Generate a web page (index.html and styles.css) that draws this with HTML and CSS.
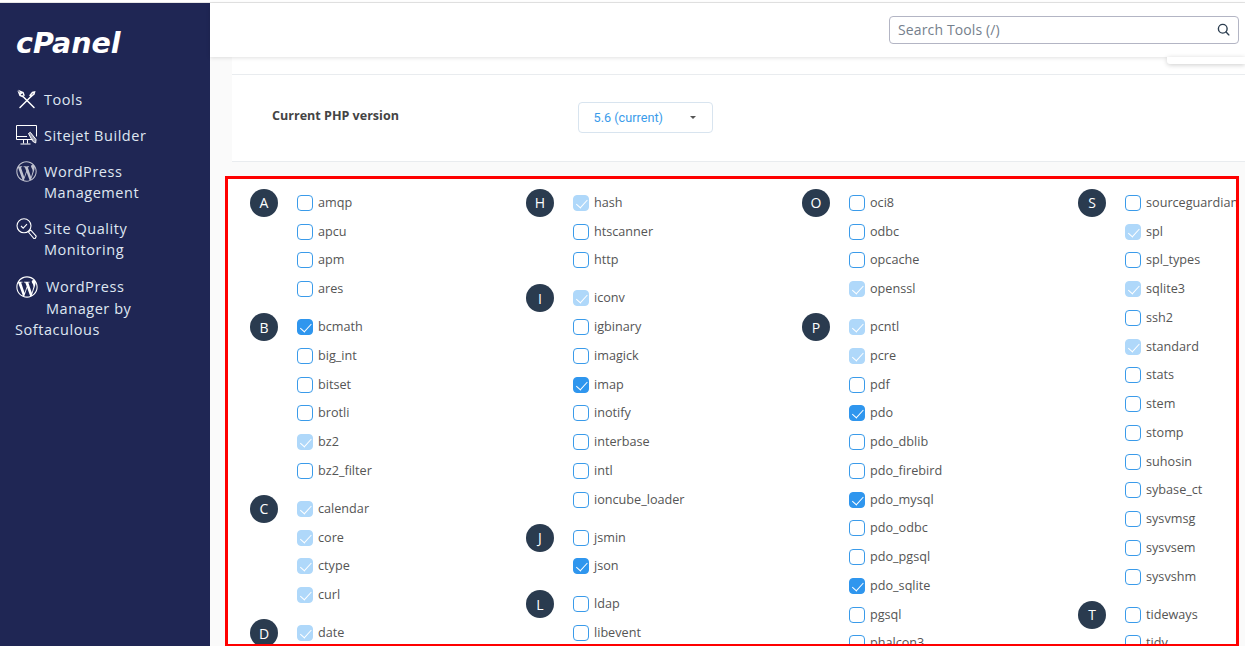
FILE: index.html
```html
<!DOCTYPE html>
<html lang="en">
<head>
<meta charset="utf-8">
<title>cPanel - Select PHP Version</title>
<link rel="stylesheet" href="styles.css">
</head>
<body>
<div class="topline"></div>
<div class="app">
  <aside class="sidebar">
    <div class="logo">cPanel</div>
    <nav class="nav">
      <a class="item one">
        <svg class="ico" viewBox="0 0 21 21" fill="none" stroke="#fff" stroke-width="1.500" stroke-linecap="round"><path d="M4 18.500 15.500 7"/><path d="M14 6.500l2.500-3 2-.5-.5 2-3 2.500"/><path d="M6.500 7 18 18.500"/><path d="M6.800 7.500 4 6.500 3 3.800l1.500 1.200 1-1-1.200-1.500 2.700 1 1 2.800"/></svg>
        Tools
      </a>
      <a class="item one">
        <svg class="ico" viewBox="0 0 21 21" fill="none" stroke="#fff" stroke-width="1"><path d="M16.500 14.500H.5V.5h20v11"/><path d="M.5 11.500h10.500"/><path d="M7.500 15v3.500M11.500 15v3.500M4.500 19h10"/><path d="M12.500 8.500l1.800-1.200 5.700 7.200-.3 3.500-3-1.700z" fill="#fff" fill-opacity=".55"/></svg>
        Sitejet Builder
      </a>
      <a class="item two">
        <svg class="ico dim" viewBox="0 0 512 512"><use href="#wp"/></svg>
        <span class="txt">WordPress<br>Management</span>
      </a>
      <a class="item two">
        <svg class="ico" viewBox="0 0 21 21" fill="none" stroke="#fff" stroke-width="1.100"><circle cx="8" cy="7.800" r="7"/><path d="M5 8l2.200 2.200 3.800-4"/><path d="M13.200 13l1.600-.8 5.400 6-.8 2-1.500.3-5.200-6z"/></svg>
        <span class="txt">Site Quality<br>Monitoring</span>
      </a>
      <a class="item wrap">
        <svg class="ico wpb" viewBox="0 0 512 512">
          <path id="wp" fill="#fff" d="M256 8C119.300 8 8 119.200 8 256c0 136.700 111.300 248 248 248s248-111.300 248-248C504 119.200 392.700 8 256 8zM33 256c0-32.300 6.900-63 19.300-90.700l106.400 291.400C84.300 420.500 33 344.200 33 256zm223 223c-21.900 0-43-3.200-63-9.100l66.900-194.400 68.500 187.800c.5 1.100 1 2.100 1.600 3.100-23.100 8.100-48 12.600-74 12.600zm30.700-327.500c13.400-.7 25.500-2.100 25.500-2.100 12-1.400 10.600-19.100-1.400-18.400 0 0-36.100 2.800-59.400 2.800-21.900 0-58.700-2.800-58.700-2.800-12-.7-13.400 17.700-1.400 18.400 0 0 11.400 1.400 23.400 2.100l34.700 95.200L200.600 393l-81.200-241.500c13.400-.7 25.500-2.100 25.500-2.100 12-1.400 10.600-19.100-1.400-18.400 0 0-36.100 2.800-59.400 2.800-4.200 0-9.100-.1-14.400-.3C109.600 73 178.100 33 256 33c58 0 110.900 22.200 150.600 58.500-1-.1-1.900-.2-2.900-.2-21.900 0-37.400 19.100-37.400 39.600 0 18.400 10.600 33.900 21.900 52.300 8.500 14.800 18.400 33.900 18.400 61.500 0 19.100-7.300 41.200-17 72.100l-22.200 74.300-80.700-239.600zm81.400 297.200l68.100-196.900c12.700-31.800 17-57.200 17-79.900 0-8.200-.5-15.800-1.500-22.900 17.400 31.800 27.300 68.200 27.300 107 0 82.300-44.600 154.100-110.900 192.700z"/>
        </svg>
        WordPress<br>Manager by<br>Softaculous
      </a>
    </nav>
  </aside>
  <main class="main">
    <header class="header">
      <div class="search">
        <span class="placeholder">Search Tools (/)</span>
        <svg class="search-ico" viewBox="0 0 14 14" fill="none" stroke="#2c3e50" stroke-width="1.500"><circle cx="6.200" cy="6.200" r="4.700"/><path d="M9.800 9.800 12.800 12.800" stroke-linecap="round"/></svg>
      </div>
    </header>
    <div class="popover"></div>
    <div class="card">
      <div class="version-row">
        <div class="version-label">Current PHP version</div>
        <div class="select"><span>5.6 (current)</span><i class="caret"></i></div>
      </div>
    </div>
    <section class="exts">
      <div class="col">
        <div class="group"><div class="badge">A</div><div class="rows">
          <label class="row"><input type="checkbox">amqp</label>
          <label class="row"><input type="checkbox">apcu</label>
          <label class="row"><input type="checkbox">apm</label>
          <label class="row"><input type="checkbox">ares</label>
        </div></div>
        <div class="group"><div class="badge">B</div><div class="rows">
          <label class="row"><input type="checkbox" checked>bcmath</label>
          <label class="row"><input type="checkbox">big_int</label>
          <label class="row"><input type="checkbox">bitset</label>
          <label class="row"><input type="checkbox">brotli</label>
          <label class="row"><input type="checkbox" checked disabled>bz2</label>
          <label class="row"><input type="checkbox">bz2_filter</label>
        </div></div>
        <div class="group"><div class="badge">C</div><div class="rows">
          <label class="row"><input type="checkbox" checked disabled>calendar</label>
          <label class="row"><input type="checkbox" checked disabled>core</label>
          <label class="row"><input type="checkbox" checked disabled>ctype</label>
          <label class="row"><input type="checkbox" checked disabled>curl</label>
        </div></div>
        <div class="group"><div class="badge">D</div><div class="rows">
          <label class="row"><input type="checkbox" checked disabled>date</label>
        </div></div>
      </div>
      <div class="col">
        <div class="group"><div class="badge">H</div><div class="rows">
          <label class="row"><input type="checkbox" checked disabled>hash</label>
          <label class="row"><input type="checkbox">htscanner</label>
          <label class="row"><input type="checkbox">http</label>
        </div></div>
        <div class="group"><div class="badge">I</div><div class="rows">
          <label class="row"><input type="checkbox" checked disabled>iconv</label>
          <label class="row"><input type="checkbox">igbinary</label>
          <label class="row"><input type="checkbox">imagick</label>
          <label class="row"><input type="checkbox" checked>imap</label>
          <label class="row"><input type="checkbox">inotify</label>
          <label class="row"><input type="checkbox">interbase</label>
          <label class="row"><input type="checkbox">intl</label>
          <label class="row"><input type="checkbox">ioncube_loader</label>
        </div></div>
        <div class="group"><div class="badge">J</div><div class="rows">
          <label class="row"><input type="checkbox">jsmin</label>
          <label class="row"><input type="checkbox" checked>json</label>
        </div></div>
        <div class="group"><div class="badge">L</div><div class="rows">
          <label class="row"><input type="checkbox">ldap</label>
          <label class="row"><input type="checkbox">libevent</label>
        </div></div>
      </div>
      <div class="col">
        <div class="group"><div class="badge">O</div><div class="rows">
          <label class="row"><input type="checkbox">oci8</label>
          <label class="row"><input type="checkbox">odbc</label>
          <label class="row"><input type="checkbox">opcache</label>
          <label class="row"><input type="checkbox" checked disabled>openssl</label>
        </div></div>
        <div class="group"><div class="badge">P</div><div class="rows">
          <label class="row"><input type="checkbox" checked disabled>pcntl</label>
          <label class="row"><input type="checkbox" checked disabled>pcre</label>
          <label class="row"><input type="checkbox">pdf</label>
          <label class="row"><input type="checkbox" checked>pdo</label>
          <label class="row"><input type="checkbox">pdo_dblib</label>
          <label class="row"><input type="checkbox">pdo_firebird</label>
          <label class="row"><input type="checkbox" checked>pdo_mysql</label>
          <label class="row"><input type="checkbox">pdo_odbc</label>
          <label class="row"><input type="checkbox">pdo_pgsql</label>
          <label class="row"><input type="checkbox" checked>pdo_sqlite</label>
          <label class="row"><input type="checkbox">pgsql</label>
          <label class="row"><input type="checkbox">phalcon3</label>
        </div></div>
      </div>
      <div class="col">
        <div class="group"><div class="badge">S</div><div class="rows">
          <label class="row"><input type="checkbox">sourceguardian</label>
          <label class="row"><input type="checkbox" checked disabled>spl</label>
          <label class="row"><input type="checkbox">spl_types</label>
          <label class="row"><input type="checkbox" checked disabled>sqlite3</label>
          <label class="row"><input type="checkbox">ssh2</label>
          <label class="row"><input type="checkbox" checked disabled>standard</label>
          <label class="row"><input type="checkbox">stats</label>
          <label class="row"><input type="checkbox">stem</label>
          <label class="row"><input type="checkbox">stomp</label>
          <label class="row"><input type="checkbox">suhosin</label>
          <label class="row"><input type="checkbox">sybase_ct</label>
          <label class="row"><input type="checkbox">sysvmsg</label>
          <label class="row"><input type="checkbox">sysvsem</label>
          <label class="row"><input type="checkbox">sysvshm</label>
        </div></div>
        <div class="group"><div class="badge">T</div><div class="rows">
          <label class="row"><input type="checkbox">tideways</label>
          <label class="row"><input type="checkbox">tidy</label>
        </div></div>
      </div>
    </section>
  </main>
</div>
</body>
</html>
```
FILE: styles.css
```css
* { box-sizing: border-box; }
html, body { margin: 0; height: 646px; overflow: hidden; }
body { background: #fff; font-family: "Open Sans", "Liberation Sans", sans-serif; color: #555; }

.topline { height: 3px; background: #fff; border-bottom: 1px solid #e6e6e6; }
.app { display: flex; height: 643px; }

/* Sidebar */
.sidebar { width: 210px; flex: none; background: #1f2654; color: #dfe7f2; padding-top: 26px; }
.logo { font-family: "DejaVu Sans", sans-serif; font-weight: 700; font-style: italic; font-size: 28.500px; line-height: 30px; color: #fff; padding-left: 16px; height: 29px; }
.nav { padding: 31px 0 0 16px; font-size: 14.500px; line-height: 21.500px; letter-spacing: 0.550px; }
.item { display: flex; align-items: flex-start; gap: 7px; color: #dfe7f2; }
.item.one { height: 36px; }
.item.two { height: 57px; line-height: 21px; }
.ico { width: 21px; height: 21px; flex: none; }
.ico.dim { opacity: 0.72; }
.item.wrap { display: block; margin: 1px 0 0 -1px; }
.ico.wpb { float: left; width: 22px; height: 22px; margin: 0 8px 18px 1px; }

/* Header */
.main { flex: 1; min-width: 0; background: #fafafa; position: relative; }
.header { height: 54px; background: #fff; box-shadow: 0 1px 4px rgba(0, 0, 0, 0.12); display: flex; justify-content: flex-end; padding: 13px 6px 0 0; position: relative; z-index: 2; }
.search { width: 350px; height: 28px; border: 1px solid #b3b5c4; border-radius: 4px; display: flex; align-items: center; justify-content: space-between; padding: 0 8px; background: #fff; }
.placeholder { font-size: 14px; letter-spacing: 0.130px; line-height: 24px; margin-top: -1px; color: #75808c; }
.search-ico { width: 13px; height: 13px; margin-top: -2px; }
.popover { position: absolute; right: 0; top: 54px; width: 78px; height: 7px; background: #fff; border-radius: 0 0 0 3px; box-shadow: 0 1px 5px rgba(0, 0, 0, 0.2); z-index: 3; }

/* Version */
.card { margin-left: 22px; padding-top: 17px; background: #fff; }
.version-row { height: 88px; border-top: 1px solid #e9ecef; border-bottom: 1px solid #e9ecef; display: flex; align-items: flex-start; padding: 27px 0 0 40px; }
.version-label { width: 306px; font-size: 12.550px; font-weight: 700; color: #444; line-height: 28px; }
.select { width: 135px; height: 31px; border: 1px solid #d8e4ef; border-radius: 4px; display: flex; align-items: center; justify-content: space-between; padding: 0 16px 0 14.500px; font-family: Roboto, sans-serif; font-size: 12.700px; color: #3a9bea; background: #fff; }
.caret { width: 0; height: 0; border-left: 3px solid transparent; border-right: 3px solid transparent; border-top: 3px solid #555; }

/* Extensions */
.exts { margin: 14px 6px 0 15px; height: 470px; border: 3px solid #f00; border-bottom-width: 2px; background: #fff; overflow: hidden; display: grid; grid-template-columns: repeat(4, 276px); padding: 8.600px 0 0 22px; align-content: start; }
.group { display: flex; margin-bottom: 9.250px; }
.badge { width: 28px; height: 28px; flex: none; margin: 1.400px 19px 0 0; border-radius: 50%; background: #2a3b4f; color: #fff; font-size: 14px; font-weight: 500; display: flex; align-items: center; justify-content: center; }
.rows { min-width: 0; flex: 1; }
.row { display: flex; align-items: center; height: 28.750px; font-size: 12.650px; color: #555; white-space: nowrap; }
.row input { appearance: none; -webkit-appearance: none; width: 16px; height: 16px; flex: none; margin: 2px 5px 0 0; border: 1.200px solid #3a9bea; border-radius: 4px; background: #fff; position: relative; }
.row input:checked { background: #2f96ee; border-color: #2f96ee; }
.row input:checked::after { content: ""; position: absolute; left: 4.500px; top: 1px; width: 5px; height: 9.500px; border: solid #fff; border-width: 0 1.500px 1.500px 0; transform: rotate(42deg); }
.row input:disabled { background: #afd8fa; border-color: #afd8fa; }
```
